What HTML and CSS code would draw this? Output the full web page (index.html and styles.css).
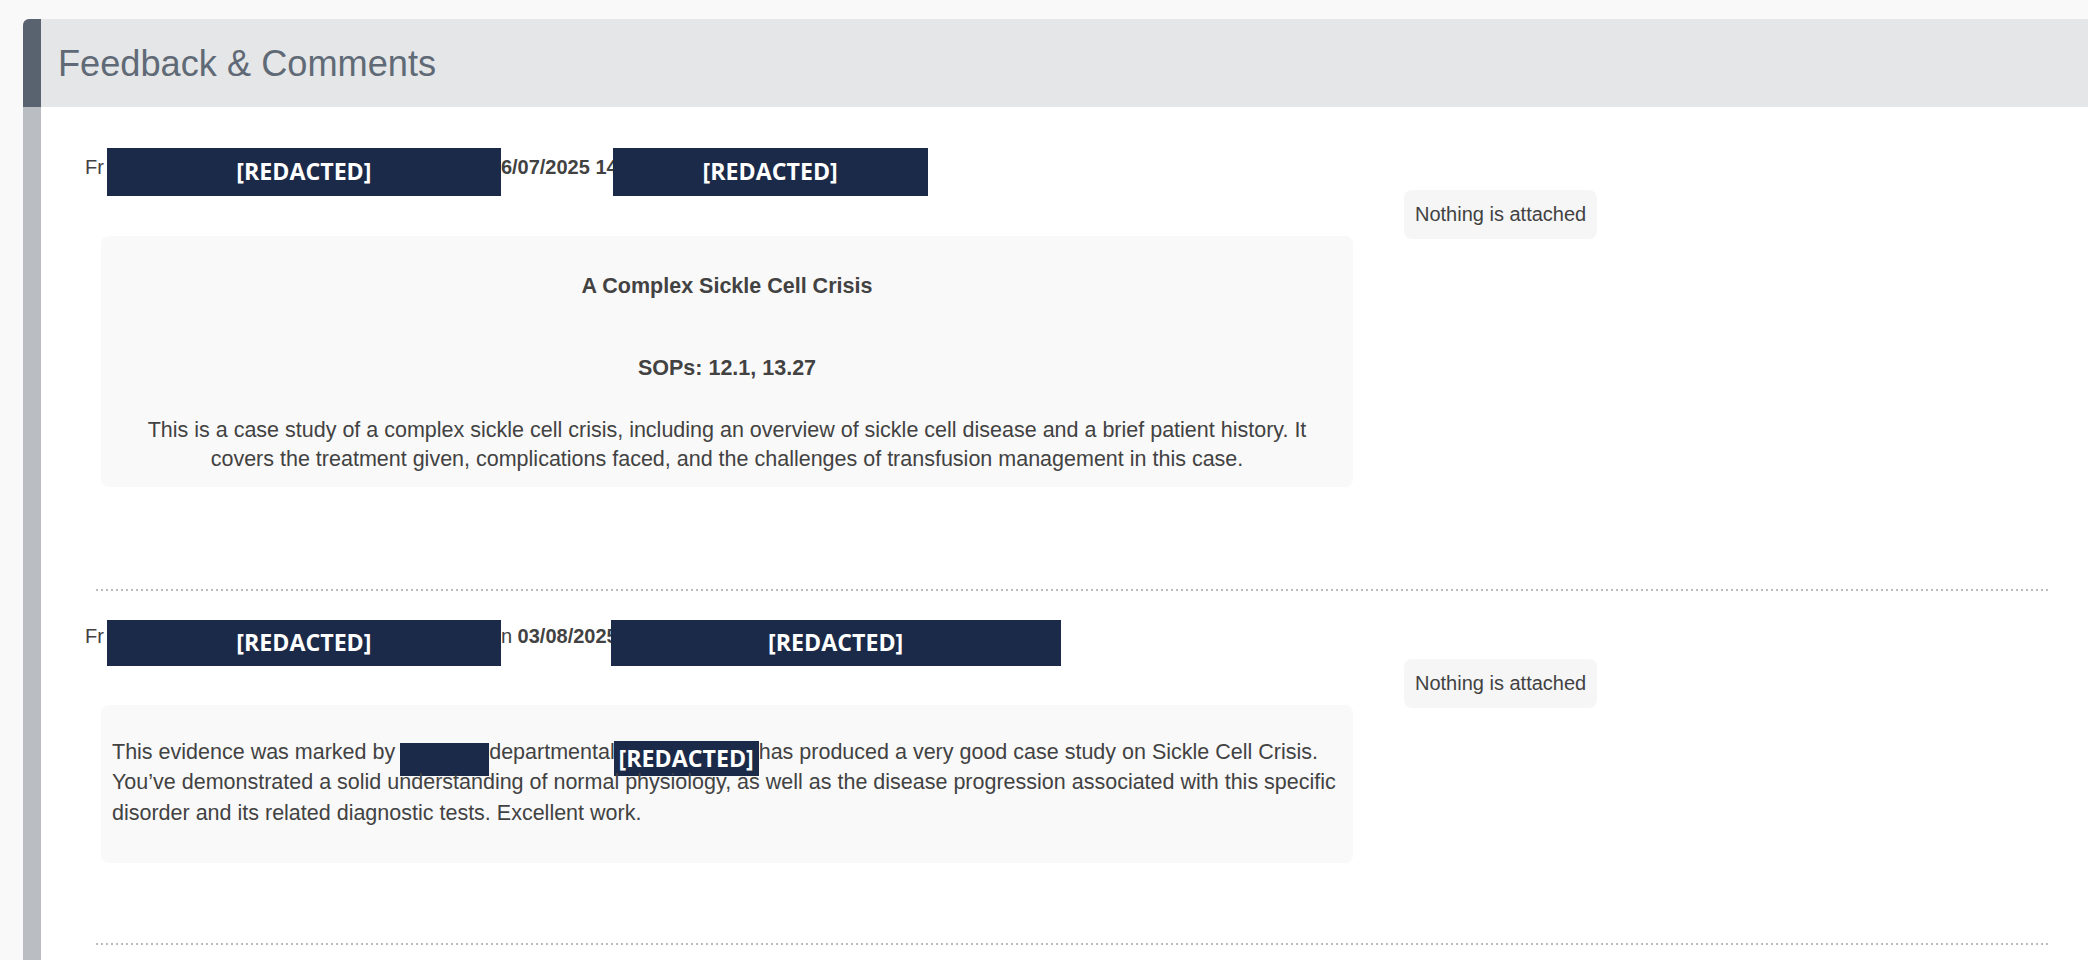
FILE: index.html
```
<!DOCTYPE html>
<html lang="en">
<head>
<meta charset="utf-8">
<title>Feedback &amp; Comments</title>
<link rel="stylesheet" href="styles.css">
</head>
<body>
<div class="panel">
  <div class="panel-heading">
    <h2 class="panel-title">Feedback &amp; Comments</h2>
  </div>
  <div class="panel-body">
    <div class="comment comment--first">
      <div class="comment-main">
        <div class="from-line">
          <span class="from-text">Fr</span>
          <span class="redact redact--name">[REDACTED]</span>
          <span class="from-text"><strong>6/07/2025 14</strong></span>
          <span class="redact redact--role">[REDACTED]</span>
        </div>
        <div class="comment-box comment-box--summary">
          <p class="summary-title">A Complex Sickle Cell Crisis</p>
          <p class="summary-sops">SOPs: 12.1, 13.27</p>
          <p class="summary-text">This is a case study of a complex sickle cell crisis, including an overview of sickle cell disease and a brief patient history. It covers the treatment given, complications faced, and the challenges of transfusion management in this case.</p>
        </div>
      </div>
      <div class="comment-side">
        <span class="pill">Nothing is attached</span>
      </div>
    </div>
    <div class="separator"></div>
    <div class="comment">
      <div class="comment-main">
        <div class="from-line from-line--low">
          <span class="from-text">Fr</span>
          <span class="redact redact--name">[REDACTED]</span>
          <span class="from-text">n <strong>03/08/2025</strong></span>
          <span class="redact redact--role-wide">[REDACTED]</span>
        </div>
        <div class="comment-box comment-box--feedback">
          <p class="feedback-text">This evidence was marked by <span class="redact-inline redact-inline--blank"></span>departmental<span class="redact-inline redact-inline--label">[REDACTED]</span>has produced a very good case study on Sickle Cell Crisis. You’ve demonstrated a solid understanding of normal physiology, as well as the disease progression associated with this specific disorder and its related diagnostic tests. Excellent work.</p>
        </div>
      </div>
      <div class="comment-side">
        <span class="pill">Nothing is attached</span>
      </div>
    </div>
    <div class="separator"></div>
  </div>
</div>
</body>
</html>
```
FILE: styles.css
```
* {
  box-sizing: border-box;
}

body {
  margin: 0;
  background: #f9f9f9;
  font-family: "Liberation Sans", Arial, sans-serif;
  color: #424242;
}

.panel {
  margin: 19px 0 0 23px;
}

.panel-heading {
  height: 88px;
  background: #e5e6e8;
  border-left: 18px solid #59636f;
  border-top-left-radius: 6px;
  display: flex;
  align-items: center;
  padding-left: 17px;
}

.panel-title {
  margin: 0;
  padding-top: 1px;
  font-size: 36.2px;
  font-weight: 400;
  line-height: 1.2;
  color: #5f6a76;
}

.panel-body {
  background: #ffffff;
  border-left: 18px solid #babec3;
  padding: 46px 37px 120px 44px;
}

.comment {
  display: flex;
  align-items: flex-start;
  margin-bottom: 80px;
}

.comment--first {
  margin-bottom: 102px;
}

.comment-main {
  flex: none;
  width: 1268px;
}

.from-line {
  display: flex;
  align-items: flex-start;
  height: 24px;
  font-size: 20px;
  line-height: 24px;
  white-space: nowrap;
}

.from-text {
  padding-top: 2px;
}

.from-text strong {
  font-weight: 700;
}

.redact {
  flex: none;
  display: flex;
  align-items: center;
  justify-content: center;
  height: 48px;
  margin-top: -5px;
  background: #1b2a48;
  color: #ffffff;
  font-family: "Open Sans", "Noto Sans", sans-serif;
  font-weight: 700;
  font-size: 23.2px;
  line-height: 1;
}

.from-line--low .redact {
  height: 46px;
  margin-top: -2px;
}

.redact--name {
  width: 394px;
  margin-left: 3px;
}

.redact--role {
  width: 315px;
  margin-left: -5px;
}

.redact--role-wide {
  width: 450px;
  margin-left: -7px;
}

.comment-box {
  width: 1252px;
  margin: 59px 0 0 16px;
  background: #f9f9f9;
  border-radius: 8px;
  font-size: 21.5px;
}

.comment-box--summary {
  padding: 12px 20px 13px;
  text-align: center;
}

.summary-title {
  margin: 22.5px 0 0;
  font-weight: 700;
  line-height: 30.7px;
}

.summary-sops {
  margin: 51.6px 0 0;
  font-weight: 700;
  line-height: 30.7px;
}

.summary-text {
  margin: 32px 0 0;
  line-height: 29.3px;
}

.comment-box--feedback {
  padding: 31.5px 8px 34.7px 11px;
  line-height: 30.7px;
}

.feedback-text {
  margin: 0;
}

.redact-inline {
  display: inline-block;
  vertical-align: top;
  background: #1b2a48;
  color: #ffffff;
  font-family: "Open Sans", "Noto Sans", sans-serif;
  font-weight: 700;
  font-size: 23.2px;
  line-height: 35px;
  text-align: center;
  margin-bottom: -12px;
}

.redact-inline--blank {
  width: 89px;
  height: 33px;
  margin-top: 6.5px;
  margin-left: -1px;
}

.redact-inline--label {
  width: 145px;
  height: 35px;
  margin-top: 4.5px;
  margin-left: -1px;
}

.comment-side {
  margin-left: 51px;
  padding-top: 37px;
}

.pill {
  display: inline-block;
  padding: 10px 11px;
  background: #f6f6f6;
  border-radius: 8px;
  font-size: 20px;
  line-height: 28.6px;
  color: #424242;
}

.separator {
  height: 2px;
  margin: 0 0 31px 11px;
  background: repeating-linear-gradient(to right, #bbbbbb 0 2px, transparent 2px 5px);
}
```
